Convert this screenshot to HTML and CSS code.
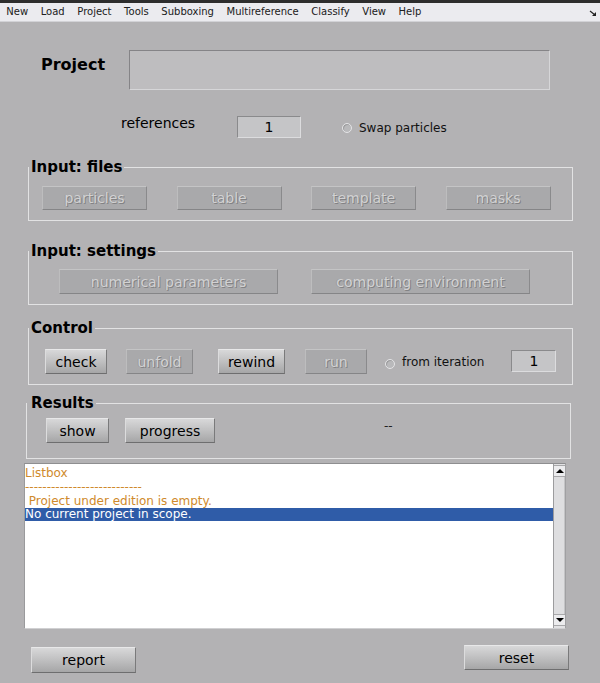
FILE: index.html
```html
<!DOCTYPE html>
<html>
<head>
<meta charset="utf-8">
<title>Multireference project</title>
<link rel="stylesheet" href="styles.css">
</head>
<body>
<div class="topstrip"></div>
<nav class="menubar">
  <span class="menu-item">New</span>
  <span class="menu-item">Load</span>
  <span class="menu-item">Project</span>
  <span class="menu-item">Tools</span>
  <span class="menu-item">Subboxing</span>
  <span class="menu-item">Multireference</span>
  <span class="menu-item">Classify</span>
  <span class="menu-item">View</span>
  <span class="menu-item">Help</span>
  <span class="menu-corner"><svg width="8" height="7" viewBox="0 0 8 7"><path d="M1 1 L6 5" stroke="#222" stroke-width="1.2" fill="none"/><path d="M3 6 L7 6 L7 2 Z" fill="#222"/></svg></span>
</nav>
<main class="main">
  <div class="project-row">
    <span class="project-label">Project</span>
    <div class="project-field"></div>
  </div>
  <div class="refs-row">
    <span class="refs-label">references</span>
    <div class="num-field refs-field">1</div>
    <span class="radio radio-swap"></span>
    <span class="radio-label swap-label">Swap particles</span>
  </div>

  <fieldset class="group group-files">
    <legend>Input: files</legend>
    <div class="group-body files-body">
      <button class="btn disabled w-files">particles</button>
      <button class="btn disabled w-files">table</button>
      <button class="btn disabled w-files">template</button>
      <button class="btn disabled w-files">masks</button>
    </div>
  </fieldset>

  <fieldset class="group group-settings">
    <legend>Input: settings</legend>
    <div class="group-body settings-body">
      <button class="btn disabled w-settings">numerical parameters</button>
      <button class="btn disabled w-settings">computing environment</button>
    </div>
  </fieldset>

  <fieldset class="group group-control">
    <legend>Control</legend>
    <div class="group-body control-body">
      <button class="btn btn-check">check</button>
      <button class="btn disabled btn-unfold">unfold</button>
      <button class="btn btn-rewind">rewind</button>
      <button class="btn disabled btn-run">run</button>
      <span class="radio radio-iter"></span>
      <span class="radio-label iter-label">from iteration</span>
      <div class="num-field iter-field">1</div>
    </div>
  </fieldset>

  <fieldset class="group group-results">
    <legend>Results</legend>
    <div class="group-body results-body">
      <button class="btn btn-show">show</button>
      <button class="btn btn-progress">progress</button>
      <span class="results-status">--</span>
    </div>
  </fieldset>

  <div class="listbox">
    <div class="list-content">
      <div class="list-line orange">Listbox</div>
      <div class="list-line orange">---------------------------</div>
      <div class="list-line orange">&nbsp;Project under edition is empty.</div>
      <div class="list-line selected">No current project in scope.</div>
    </div>
    <div class="scrollbar">
      <div class="sb-btn"><svg width="8" height="4" viewBox="0 0 8 4"><path d="M0 4 L4 0 L8 4 Z" fill="#000"/></svg></div>
      <div class="sb-track"></div>
      <div class="sb-btn"><svg width="8" height="4" viewBox="0 0 8 4"><path d="M0 0 L8 0 L4 4 Z" fill="#000"/></svg></div>
    </div>
  </div>

  <div class="footer-row">
    <button class="btn btn-report">report</button>
    <button class="btn btn-reset">reset</button>
  </div>
</main>
</body>
</html>
```

FILE: styles.css
```css
html, body {
  margin: 0;
  padding: 0;
}
body {
  width: 600px;
  height: 683px;
  overflow: hidden;
  background: #b3b2b4;
  font-family: "DejaVu Sans", "Liberation Sans", sans-serif;
  color: #000;
}
.topstrip {
  height: 3px;
  background: #2d2d2d;
}
.menubar {
  height: 18px;
  background: #ebebef;
  border-bottom: 1px solid #d2d2d6;
  display: flex;
  align-items: center;
  font-size: 10px;
  line-height: 18px;
  color: #202020;
}
.menu-item {
  padding: 0 6.3px;
}
.menu-corner {
  margin-left: auto;
  margin-right: 3px;
  display: flex;
  align-items: center;
  margin-top: 2px;
}
.main {
  display: flex;
  flex-direction: column;
  align-items: flex-start;
}
.project-row {
  display: flex;
  align-items: flex-start;
  margin-top: 28px;
  margin-left: 41px;
}
.project-label {
  width: 88px;
  font-weight: bold;
  font-size: 16px;
  line-height: 19px;
  margin-top: 5px;
}
.project-field {
  width: 421px;
  height: 40px;
  box-sizing: border-box;
  background: #bebdbf;
  border-top: 1px solid #858487;
  border-left: 1px solid #858487;
  border-bottom: 1px solid #d6d6d8;
  border-right: 1px solid #d6d6d8;
}
.refs-row {
  display: flex;
  align-items: flex-start;
  margin-top: 26px;
  margin-left: 121px;
}
.refs-label {
  font-size: 14px;
  line-height: 16px;
  width: 116px;
  margin-top: -1px;
}
.num-field {
  box-sizing: border-box;
  height: 22px;
  background: #c5c5c7;
  border-top: 1px solid #8a8a8c;
  border-left: 1px solid #8a8a8c;
  border-bottom: 1px solid #dcdcde;
  border-right: 1px solid #dcdcde;
  display: flex;
  align-items: center;
  justify-content: center;
  font-size: 14px;
  line-height: 16px;
}
.refs-field {
  width: 64px;
}
.radio {
  box-sizing: border-box;
  width: 10px;
  height: 10px;
  border-radius: 50%;
  border: 1px solid #e4e4e6;
  background: #b9b9bb;
  box-shadow: inset 1px 1px 0 #9a9a9c;
  flex: none;
}
.radio-swap {
  margin-left: 41px;
  margin-top: 7px;
}
.radio-label {
  font-size: 12px;
  line-height: 14px;
  margin-left: 7px;
  color: #111;
}
.swap-label {
  margin-top: 5px;
}

/* group frames */
.group {
  box-sizing: border-box;
  width: 545px;
  margin: 0 0 0 28px;
  padding: 0;
  border: 1px solid #e2e2e3;
  min-inline-size: 0;
}
.group legend {
  font-weight: bold;
  font-size: 15px;
  line-height: 16px;
  padding: 0 2px 0 2px;
  margin-left: 0;
}
.group-body {
  display: flex;
  align-items: flex-start;
}
.group-files {
  margin-top: 21px;
}
.files-body {
  padding: 11px 0 10px 13px;
  gap: 29.5px;
}
.group-settings {
  margin-top: 22px;
}
.settings-body {
  padding: 10px 0 10px 30px;
  gap: 33px;
}
.group-control {
  margin-top: 15px;
}
.control-body {
  padding: 13px 0 10px 16px;
}
.group-results {
  margin-top: 10px;
  margin-left: 26px;
}
.group-results legend {
  padding-left: 4px;
}
.results-body {
  padding: 7px 0 15px 19px;
}

/* buttons */
.btn {
  box-sizing: border-box;
  height: 25px;
  margin: 0;
  padding: 0;
  font-family: "DejaVu Sans", "Liberation Sans", sans-serif;
  font-size: 14px;
  line-height: 16px;
  color: #000;
  background: linear-gradient(to bottom, #d8d8d9 0%, #c2c2c3 45%, #a6a6a7 100%);
  border-top: 1px solid #e8e8e9;
  border-left: 1px solid #dcdcdd;
  border-bottom: 1px solid #6e6e6f;
  border-right: 1px solid #7a7a7b;
  display: flex;
  align-items: center;
  justify-content: center;
}
.btn.disabled {
  background: #a9a9ab;
  color: #d2d2d3;
  text-shadow: 1px 1px 0 #828284, -1px 0 0 #9c9c9e;
  border-top: 1px solid #c4c4c5;
  border-left: 1px solid #bdbdbe;
  border-bottom: 1px solid #858587;
  border-right: 1px solid #8a8a8c;
}
.w-files {
  width: 105px;
  height: 24px;
}
.w-settings {
  width: 219px;
}
.btn-check {
  width: 62px;
}
.btn-unfold {
  width: 67px;
  margin-left: 19px;
}
.btn-rewind {
  width: 67px;
  margin-left: 25px;
}
.btn-run {
  width: 62px;
  margin-left: 20px;
}
.radio-iter {
  margin-left: 18px;
  margin-top: 10px;
}
.iter-label {
  margin-top: 6px;
}
.iter-field {
  width: 45px;
  margin-left: 27px;
  margin-top: 1px;
}
.btn-show {
  width: 63px;
}
.btn-progress {
  width: 90px;
  margin-left: 16px;
}
.results-status {
  font-size: 12px;
  line-height: 14px;
  margin-left: 169px;
  margin-top: 1px;
  color: #222;
}

/* listbox */
.listbox {
  box-sizing: border-box;
  margin-top: 4px;
  margin-left: 24px;
  width: 542px;
  height: 166px;
  background: #fff;
  border-top: 1px solid #8e8e90;
  border-left: 1px solid #9a9a9c;
  border-right: 1px solid #a0a0a2;
  border-bottom: 1px solid #d0d0d2;
  display: flex;
}
.list-content {
  flex: 1;
  padding-top: 2px;
  font-size: 12px;
  line-height: 14px;
}
.list-line {
  white-space: pre;
  height: 14px;
}
.orange {
  color: #cf8a2c;
}
.selected {
  background: #2f5ca8;
  color: #fff;
  height: 13px;
  line-height: 13px;
  margin-top: 0;
}
.scrollbar {
  width: 12px;
  box-sizing: border-box;
  border-left: 1px solid #9c9c9e;
  background: #e2e2e4;
  display: flex;
  flex-direction: column;
  padding: 1px 0 2px 0;
}
.sb-btn {
  height: 12px;
  box-sizing: border-box;
  background: #ececee;
  border-bottom: 1px solid #a8a8aa;
  border-top: 1px solid #a8a8aa;
  display: flex;
  align-items: center;
  justify-content: center;
}
.sb-track {
  flex: 1;
  background: #dedee0;
  border-right: 1px solid #c4c4c6;
}

/* footer */
.footer-row {
  box-sizing: border-box;
  width: 600px;
  display: flex;
  justify-content: space-between;
  align-items: flex-start;
  padding: 0 31px 0 31px;
  margin-top: 16px;
}
.btn-report {
  width: 105px;
  height: 26px;
  margin-top: 2px;
}
.btn-reset {
  width: 105px;
}
```
